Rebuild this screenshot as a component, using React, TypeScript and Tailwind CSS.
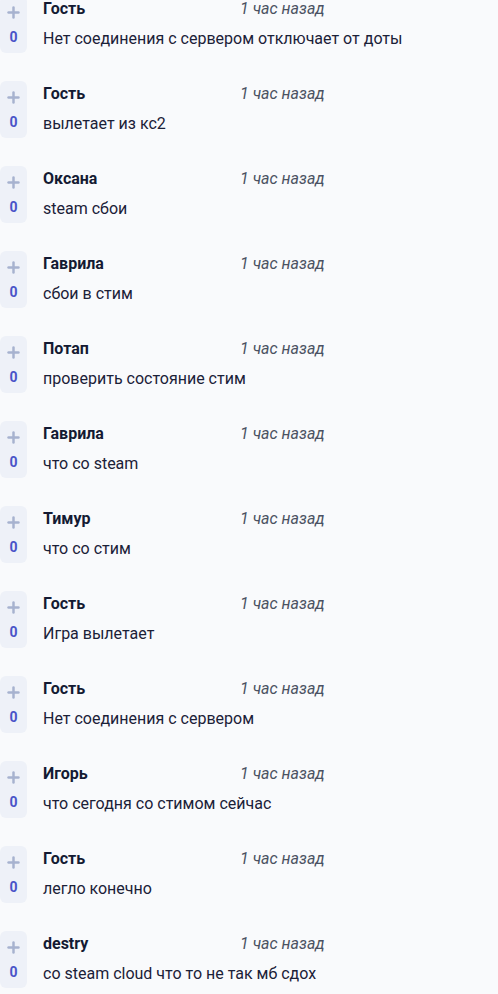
import { Plus } from 'lucide-react'

const COMMENTS = [
  { name: 'Гость', text: 'Нет соединения с сервером отключает от доты' },
  { name: 'Гость', text: 'вылетает из кс2' },
  { name: 'Оксана', text: 'steam сбои' },
  { name: 'Гаврила', text: 'сбои в стим' },
  { name: 'Потап', text: 'проверить состояние стим' },
  { name: 'Гаврила', text: 'что со steam' },
  { name: 'Тимур', text: 'что со стим' },
  { name: 'Гость', text: 'Игра вылетает' },
  { name: 'Гость', text: 'Нет соединения с сервером' },
  { name: 'Игорь', text: 'что сегодня со стимом сейчас' },
  { name: 'Гость', text: 'легло конечно' },
  { name: 'destry', text: 'со steam cloud что то не так мб сдох' },
]

function Comment({ name, text }: { name: string; text: string }) {
  return (
    <div className="flex gap-4 h-[85px]">
      <div className="w-[27px] h-[57px] shrink-0 rounded-md bg-[#eef1f8] flex flex-col items-center pt-[8px]">
        <Plus className="w-[17px] h-[17px] text-[#a7b2cf]" strokeWidth={3.5} />
        <span className="mt-[9px] text-[14px] font-bold text-[#4a55c8] leading-none">0</span>
      </div>
      <div className="flex flex-col pt-[1px]">
        <div className="flex items-baseline h-[22px]">
          <span className="w-[197px] text-[16px] font-bold text-[#141a33]">{name}</span>
          <span className="text-[16px] italic text-[#4b5262]">1 час назад</span>
        </div>
        <div className="mt-[10px] text-[16px] text-[#1b2138] leading-[20px]">{text}</div>
      </div>
    </div>
  )
}

export default function App() {
  return (
    <div className="min-h-screen bg-[#f9fafc] overflow-hidden h-[994px]" style={{ fontFamily: 'Roboto, sans-serif' }}>
      <div className="-mt-[4px]">
        {COMMENTS.map((c, i) => (
          <Comment key={i} name={c.name} text={c.text} />
        ))}
      </div>
    </div>
  )
}
